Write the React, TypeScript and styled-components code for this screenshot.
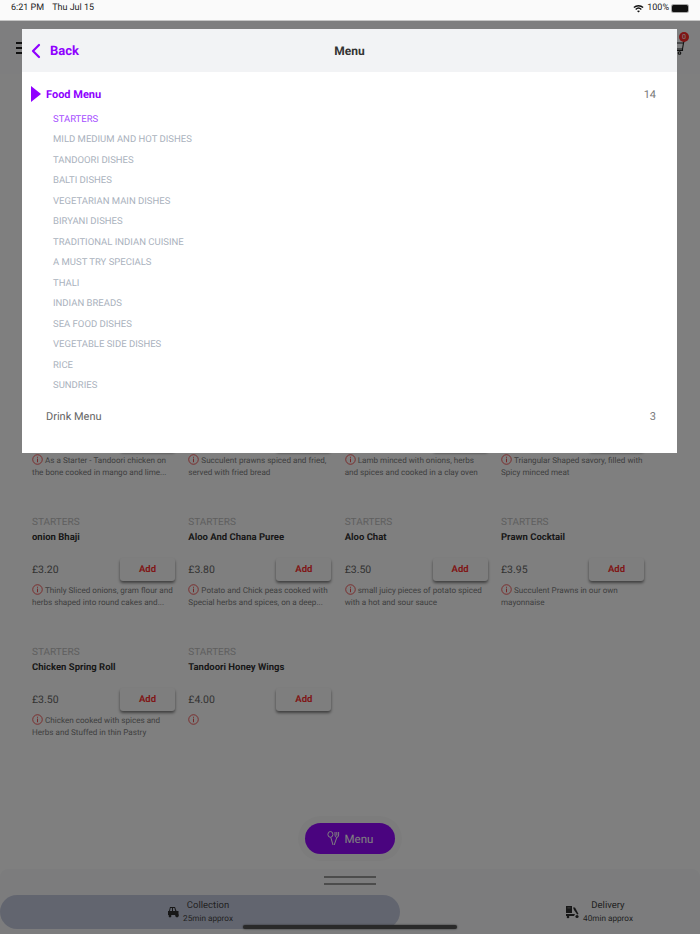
import React, { FC } from "react";
import styled, { createGlobalStyle } from "styled-components";
import { ChevronLeft } from "lucide-react";

const categories = [
    "STARTERS",
    "MILD MEDIUM AND HOT DISHES",
    "TANDOORI DISHES",
    "BALTI DISHES",
    "VEGETARIAN MAIN DISHES",
    "BIRYANI DISHES",
    "TRADITIONAL INDIAN CUISINE",
    "A MUST TRY SPECIALS",
    "THALI",
    "INDIAN BREADS",
    "SEA FOOD DISHES",
    "VEGETABLE SIDE DISHES",
    "RICE",
    "SUNDRIES",
];

// the top row sits mostly behind the modal, only its description shows
const dishes = [
    { name: "", price: "", text: "As a Starter - Tandoori chicken on the bone cooked in mango and lime..." },
    { name: "", price: "", text: "Succulent prawns spiced and fried, served with fried bread" },
    { name: "", price: "", text: "Lamb minced with onions, herbs and spices and cooked in a clay oven" },
    { name: "", price: "", text: "Triangular Shaped savory, filled with Spicy minced meat" },
    { name: "onion Bhaji", price: "£3.20", text: "Thinly Sliced onions, gram flour and herbs shaped into round cakes and..." },
    { name: "Aloo And Chana Puree", price: "£3.80", text: "Potato and Chick peas cooked with Special herbs and spices, on a deep..." },
    { name: "Aloo Chat", price: "£3.50", text: "small juicy pieces of potato spiced with a hot and sour sauce" },
    { name: "Prawn Cocktail", price: "£3.95", text: "Succulent Prawns in our own mayonnaise" },
    { name: "Chicken Spring Roll", price: "£3.50", text: "Chicken cooked with spices and Herbs and Stuffed in thin Pastry" },
    { name: "Tandoori Honey Wings", price: "£4.00", text: "" },
];

const InfoIcon: FC = () => (
    <InfoSvg viewBox="0 0 12 12">
        <circle cx="6" cy="6" r="5.2" fill="none" stroke="currentColor" strokeWidth="0.9" />
        <rect x="5.5" y="5" width="1" height="4" fill="currentColor" />
        <rect x="5.5" y="3" width="1" height="1.1" fill="currentColor" />
    </InfoSvg>
);

const WifiIcon: FC = () => (
    <svg width="11" height="9" viewBox="0 0 11 9">
        <path d="M0.4 3.1 A7.4 7.4 0 0 1 10.6 3.1 L9.6 4.1 A6 6 0 0 0 1.4 4.1 Z" fill="#111" />
        <path d="M2.2 4.9 A4.8 4.8 0 0 1 8.8 4.9 L7.8 5.9 A3.4 3.4 0 0 0 3.2 5.9 Z" fill="#111" />
        <path d="M5.5 8.6 L4 7.1 A2.2 2.2 0 0 1 7 7.1 Z" fill="#111" />
    </svg>
);

const ForkSpoon: FC = () => (
    <svg width="14" height="15" viewBox="0 0 14 15" fill="none" stroke="#fff" strokeWidth="1">
        <ellipse cx="3.4" cy="3.4" rx="2.5" ry="2.9" />
        <path d="M3.8 6.3 L6 14" />
        <path d="M8 1 V4 Q8 6.2 9.8 6.4 Q11.6 6.2 11.6 4 V1 M9.8 1 V4.6 M9.8 6.4 L7.2 14" />
    </svg>
);

const ScooterIcon: FC = () => (
    <svg width="15" height="14" viewBox="0 0 15 14" fill="#303030">
        <rect x="1" y="1" width="6" height="7" />
        <rect x="2.4" y="2.4" width="3.2" height="1" fill="#808080" />
        <path d="M1 9 H10 L9 11 H1 Z" />
        <path d="M8 2.5 L10 2.5 L13.5 9 L12.2 9.6 L9 5 Z" />
        <circle cx="3" cy="12" r="1.3" />
        <circle cx="12" cy="11.5" r="1.6" />
    </svg>
);

const CollectIcon: FC = () => (
    <svg width="13" height="12" viewBox="0 0 13 12" fill="#303030">
        <path d="M3 1 H8 L9.5 5 H11.5 V9 H1 V5 H2 Z M3.6 2 L3 5 H5 V2 Z M6 2 V5 H8.2 L7.4 2 Z" fillRule="evenodd" />
        <circle cx="3" cy="10" r="1.4" />
        <circle cx="10" cy="9.6" r="1.8" />
    </svg>
);

const App: FC = () => (
    <Screen>
        <GlobalStyle />
        <StatusBar>
            <StatusText>
                <span>6:21 PM</span>
                <span>Thu Jul 15</span>
            </StatusText>
            <StatusIcons>
                <WifiIcon />
                <span>100%</span>
                <Battery />
            </StatusIcons>
        </StatusBar>
        <Page>
            <TopBar>
                <Burger><i /><i /><i /></Burger>
                <CartWrap>
                    <svg width="10" height="17" viewBox="0 0 10 17" fill="none" stroke="#222" strokeWidth="1.1">
                        <path d="M0 4 H7.5 L9 0 M7.5 4 L6.5 10 H0 M6.5 10 V11.5 H1" />
                        <circle cx="3.5" cy="14" r="1.3" />
                    </svg>
                    <CartBadge>0</CartBadge>
                </CartWrap>
            </TopBar>
            <Grid>
                {dishes.map((d, i) => (
                    <Card key={i}>
                        <Category>{d.name && "STARTERS"}</Category>
                        <DishName>{d.name}</DishName>
                        <PriceRow>
                            <Price>{d.price}</Price>
                            <AddButton>{d.name && "Add"}</AddButton>
                        </PriceRow>
                        <Description>
                            <InfoIcon />
                            {d.text}
                        </Description>
                    </Card>
                ))}
            </Grid>
            <MenuHalo>
                <MenuButton>
                    <ForkSpoon />
                    Menu
                </MenuButton>
            </MenuHalo>
            <Sheet>
                <Handle><i /><i /></Handle>
                <Tabs>
                    <Tab $active>
                        <CollectIcon />
                        <TabText>
                            <TabTitle>Collection</TabTitle>
                            <TabSub>25min approx</TabSub>
                        </TabText>
                    </Tab>
                    <Tab>
                        <ScooterIcon />
                        <TabText>
                            <TabTitle>Delivery</TabTitle>
                            <TabSub>40min approx</TabSub>
                        </TabText>
                    </Tab>
                </Tabs>
            </Sheet>
            <HomeBar />
            <Scrim />
        </Page>
        <Modal>
            <ModalHeader>
                <BackButton>
                    <ChevronLeft size={24} strokeWidth={2.2} />
                    Back
                </BackButton>
                <ModalTitle>Menu</ModalTitle>
            </ModalHeader>
            <MenuRow $active>
                <Triangle />
                <MenuName $active>Food Menu</MenuName>
                <Count>14</Count>
            </MenuRow>
            <CategoryList>
                {categories.map((c, i) => (
                    <CategoryItem key={c} $active={i === 0}>{c}</CategoryItem>
                ))}
            </CategoryList>
            <MenuRow>
                <MenuName>Drink Menu</MenuName>
                <Count>3</Count>
            </MenuRow>
        </Modal>
    </Screen>
);

export default App;

const GlobalStyle = createGlobalStyle`
    html, body {
        margin: 0;
        padding: 0;
        background: #fff;
    }
    * {
        box-sizing: border-box;
    }
`;

const Screen = styled.div`
    position: relative;
    width: 700px;
    height: 934px;
    overflow: hidden;
    display: flex;
    flex-direction: column;
    font-family: Roboto, "Liberation Sans", sans-serif;
    text-rendering: geometricPrecision;
`;

const StatusBar = styled.div`
    height: 21px;
    flex: none;
    display: flex;
    align-items: center;
    justify-content: space-between;
    padding: 0 12px 4px 11px;
    background: #fafafa;
    border-bottom: 1px solid #c6c6c6;
    font-size: 9px;
    color: #222;
`;

const StatusText = styled.div`
    display: flex;
    gap: 8px;
`;

const StatusIcons = styled.div`
    display: flex;
    align-items: center;
    gap: 3px;
`;

const Battery = styled.div`
    width: 16px;
    height: 7px;
    background: #111;
    border-radius: 1.5px;
    box-shadow: 0 0 0 1px #aaa;
`;

const Page = styled.div`
    position: relative;
    flex: 1;
    display: flex;
    flex-direction: column;
    background: #fff;
`;

const Scrim = styled.div`
    position: absolute;
    inset: 0;
    background: rgba(0, 0, 0, 0.5);
`;

const TopBar = styled.div`
    height: 53px;
    flex: none;
    display: flex;
    align-items: center;
    justify-content: space-between;
    padding: 0 14px 0 16px;
    background: #fcfdfe;
`;

const Burger = styled.div`
    display: flex;
    flex-direction: column;
    gap: 3px;
    i {
        display: block;
        width: 14px;
        height: 2px;
        background: #222;
    }
`;

const CartWrap = styled.div`
    position: relative;
    width: 10px;
    height: 17px;
`;

const CartBadge = styled.span`
    position: absolute;
    top: -7px;
    left: 3px;
    width: 10px;
    height: 10px;
    border-radius: 50%;
    background: #ff2a2a;
    color: #fff;
    font-size: 7px;
    line-height: 10px;
    text-align: center;
`;

const Grid = styled.div`
    display: grid;
    grid-template-columns: repeat(4, 143px);
    column-gap: 13.33px;
    grid-auto-rows: 130px;
    padding: 312px 0 0 32px;
`;

const Card = styled.div`
    display: flex;
    flex-direction: column;
`;

const Category = styled.div`
    height: 14px;
    font-size: 10px;
    line-height: 14px;
    color: #c0c0c0;
`;

const DishName = styled.div`
    height: 16px;
    font-size: 9.5px;
    line-height: 16px;
    font-weight: 700;
    color: #333;
`;

const PriceRow = styled.div`
    display: flex;
    align-items: center;
    justify-content: space-between;
    margin-top: 12px;
`;

const Price = styled.div`
    font-size: 10.5px;
    color: #666;
`;

const AddButton = styled.div`
    width: 55px;
    height: 23px;
    display: flex;
    align-items: center;
    justify-content: center;
    border-radius: 3px;
    background: #fdfdfd;
    box-shadow: 0 2px 3px rgba(0, 0, 0, 0.5);
    font-size: 9.5px;
    font-weight: 700;
    color: #ff3333;
`;

const Description = styled.div`
    margin-top: 3px;
    font-size: 8.1px;
    line-height: 11.5px;
    color: #808080;
`;

const InfoSvg = styled.svg`
    width: 11px;
    height: 11px;
    margin-right: 2px;
    vertical-align: -2px;
    color: #f03c3c;
`;

const MenuHalo = styled.div`
    position: absolute;
    top: 795px;
    left: 298px;
    width: 104px;
    height: 45px;
    padding: 7px;
    border-radius: 23px;
    background: #f9f9f9;
`;

const MenuButton = styled.div`
    height: 31px;
    display: flex;
    align-items: center;
    justify-content: center;
    gap: 4px;
    border-radius: 16px;
    background: #9409ff;
    color: #fff;
    font-size: 11.5px;
`;

const Sheet = styled.div`
    position: absolute;
    left: 0;
    right: 0;
    bottom: 0;
    height: 65px;
    border-radius: 8px 8px 0 0;
    background: #f8f9fb;
    display: flex;
    flex-direction: column;
`;

const Handle = styled.div`
    flex: none;
    height: 26px;
    padding-top: 7px;
    display: flex;
    flex-direction: column;
    align-items: center;
    gap: 5px;
    i {
        display: block;
        width: 52px;
        height: 2px;
        background: #999;
    }
`;

const Tabs = styled.div`
    display: grid;
    grid-template-columns: 400px 1fr;
`;

const Tab = styled.div<{ $active?: boolean }>`
    height: 34px;
    display: flex;
    align-items: center;
    justify-content: center;
    gap: 3px;
    padding-left: ${(p) => (p.$active ? "0" : "98px")};
    border-radius: 17px;
    background: ${(p) => (p.$active ? "#c5cbdf" : "transparent")};
`;

const TabText = styled.div`
    display: flex;
    flex-direction: column;
    align-items: center;
    color: #444;
`;

const TabTitle = styled.span`
    font-size: 9.5px;
    line-height: 14px;
`;

const TabSub = styled.span`
    font-size: 8.2px;
    line-height: 12px;
`;

const HomeBar = styled.div`
    position: absolute;
    left: 243px;
    bottom: 5px;
    width: 214px;
    height: 4px;
    border-radius: 2px;
    background: #555;
    box-shadow: 0 0 2px #555;
`;

const Modal = styled.div`
    position: absolute;
    top: 29px;
    left: 22px;
    width: 655px;
    height: 424px;
    background: #fff;
    display: flex;
    flex-direction: column;
`;

const ModalHeader = styled.div`
    position: relative;
    height: 43px;
    flex: none;
    display: flex;
    align-items: center;
    justify-content: center;
    background: #f2f3f5;
    margin-bottom: 7px;
`;

const BackButton = styled.div`
    position: absolute;
    left: 2px;
    top: 1px;
    bottom: 0;
    display: flex;
    align-items: center;
    gap: 2px;
    color: #8f00ff;
    font-size: 13px;
    font-weight: 700;
`;

const ModalTitle = styled.div`
    font-size: 12px;
    font-weight: 700;
    color: #333;
`;

const MenuRow = styled.div<{ $active?: boolean }>`
    height: 30px;
    flex: none;
    display: flex;
    align-items: center;
    padding: 0 21px 0 ${(p) => (p.$active ? "9px" : "24px")};
`;

const Triangle = styled.div`
    width: 0;
    height: 0;
    margin-right: 5px;
    border-top: 8px solid transparent;
    border-bottom: 8px solid transparent;
    border-left: 10px solid #8f00ff;
`;

const MenuName = styled.div<{ $active?: boolean }>`
    flex: 1;
    font-size: 11px;
    font-weight: ${(p) => (p.$active ? 700 : 400)};
    color: ${(p) => (p.$active ? "#8f00ff" : "#666")};
`;

const Count = styled.div`
    font-size: 11px;
    color: #777;
`;

const CategoryList = styled.div`
    display: flex;
    flex-direction: column;
    padding: 0 0 5px 31px;
`;

const CategoryItem = styled.div<{ $active?: boolean }>`
    height: 20.5px;
    display: flex;
    align-items: center;
    font-size: 9.5px;
    color: ${(p) => (p.$active ? "#a64dff" : "#aab2bd")};
`;
